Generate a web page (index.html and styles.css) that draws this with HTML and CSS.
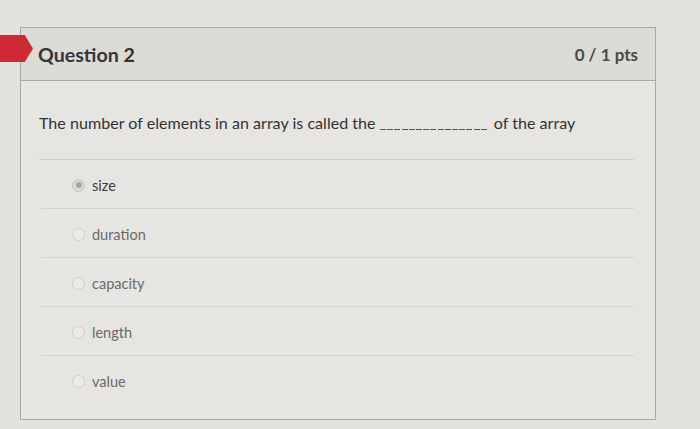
FILE: index.html
```html
<!DOCTYPE html>
<html>
<head>
<meta charset="utf-8">
<link rel="stylesheet" href="styles.css">
</head>
<body>
<div class="page">
  <div class="flag"></div>
  <div class="card">
    <div class="header">
      <span class="title">Question 2</span>
      <span class="pts">0 / 1 pts</span>
    </div>
    <div class="body">
      <p class="question">The number of elements in an array is called the <span class="blank"></span> of the array</p>
      <div class="answers">
        <div class="answer selected"><span class="radio"></span><span class="label">size</span></div>
        <div class="answer"><span class="radio"></span><span class="label">duration</span></div>
        <div class="answer"><span class="radio"></span><span class="label">capacity</span></div>
        <div class="answer"><span class="radio"></span><span class="label">length</span></div>
        <div class="answer"><span class="radio"></span><span class="label">value</span></div>
      </div>
    </div>
  </div>
</div>
</body>
</html>
```
FILE: styles.css
```css
html, body {
  margin: 0;
  padding: 0;
  background: #e3e2dd;
  font-family: Lato, "Open Sans", sans-serif;
}
.page {
  position: relative;
  width: 700px;
  height: 429px;
  padding: 27px 0 0 20px;
  box-sizing: border-box;
}
.flag {
  position: absolute;
  left: 0;
  top: 35px;
  width: 33px;
  height: 27px;
  background: #cf2a33;
  clip-path: polygon(0 0, 75% 0, 100% 50%, 75% 100%, 0 100%);
}
.card {
  width: 636px;
  height: 393px;
  border: 1px solid #a9a8a3;
  box-sizing: border-box;
  background: #e6e5e1;
}
.header {
  height: 53px;
  box-sizing: border-box;
  border-bottom: 1px solid #a9a8a3;
  background: #dcdbd6;
  display: flex;
  align-items: center;
  justify-content: space-between;
  padding: 1px 17px 0 17px;
}
.title {
  font-size: 19.6px;
  font-weight: bold;
  color: #353535;
}
.pts {
  font-size: 17px;
  font-weight: bold;
  color: #4a4a4a;
}
.body {
  padding: 32px 21px 0 17px;
}
.question {
  margin: 0 0 0 1px;
  font-size: 16.1px;
  line-height: 20px;
  color: #333;
  padding-bottom: 26px;
  border-bottom: 1px solid #cfcec9;
}
.blank {
  display: inline-block;
  width: 108px;
  height: 1px;
  margin: 0 2px 0 0;
  vertical-align: -1px;
  background: repeating-linear-gradient(to right, #555 0 6px, transparent 6px 7.2px);
}
.answers {
  margin-left: 3px;
}
.answer {
  height: 49px;
  border-bottom: 1px solid #d2d1cc;
  display: flex;
  align-items: center;
  padding: 2px 0 0 31px;
  box-sizing: border-box;
  gap: 7px;
}
.answer:last-child {
  border-bottom: none;
}
.radio {
  width: 13px;
  height: 13px;
  border-radius: 50%;
  border: 1px solid #cfcec9;
  background: #ebeae6;
  box-sizing: border-box;
  position: relative;
}
.selected .radio {
  border-color: #c4c3be;
  background: #dcdbd7;
}
.selected .radio::after {
  content: "";
  position: absolute;
  left: 2.5px;
  top: 2.5px;
  width: 6px;
  height: 6px;
  border-radius: 50%;
  background: #a5a4a0;
}
.label {
  font-size: 14.5px;
  color: #6a6a68;
}
.selected .label {
  color: #3c3c3c;
}
```
